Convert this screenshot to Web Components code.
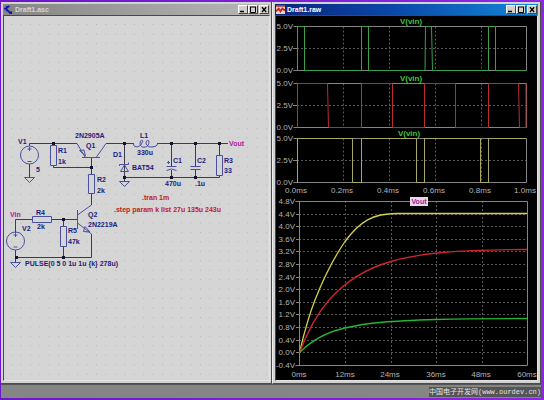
<!DOCTYPE html>
<html lang="en">
<head>
<meta charset="utf-8">
<title>Draft1</title>
<style>
html, body { height: 100%; margin: 0; }
body { background: #7a1fd2; font-family: "Liberation Sans", Arial, sans-serif; }
</style>
</head>
<body>
<app-desktop>
  <mdi-window caption="Draft1.asc"><circuit-sheet></circuit-sheet></mdi-window>
  <mdi-window caption="Draft1.raw" active><wave-viewer></wave-viewer></mdi-window>
  <site-mark slot="footer">中国电子开发网(www.ourdev.cn)</site-mark>
</app-desktop>
<script>
class AppDesktop extends HTMLElement {
  constructor() {
    super();
    this.attachShadow({ mode: 'open' }).innerHTML = `
      <style>
        :host { display: flex; flex-direction: column; box-sizing: border-box; min-height: 100%; padding: 2px 3px 2px 1px; background: linear-gradient(90deg, #6a18c8, #8a28e0); }
        main { flex: 1; display: grid; grid-template-columns: 271fr 269fr; }
        footer { display: flex; justify-content: flex-end; align-items: center; background: #858585; border-top: 1px solid #555; height: 13px; }
      </style>
      <main><slot></slot></main>
      <footer><slot name="footer"></slot></footer>`;
  }
}
customElements.define('app-desktop', AppDesktop);

class SiteMark extends HTMLElement {
  constructor() {
    super();
    this.attachShadow({ mode: 'open' }).innerHTML = `
      <style>
        :host { display: block; background: #555; color: #e4e4e4; font: 7px/10px "Liberation Mono", "Noto Sans CJK SC", monospace; white-space: nowrap; }
      </style><slot></slot>`;
  }
}
customElements.define('site-mark', SiteMark);

class MdiWindow extends HTMLElement {
  constructor() {
    super();
    const active = this.hasAttribute('active');
    const logo = active
      ? `<rect width="10" height="10" fill="#e9d3cf"/><rect y="0" width="10" height="2" fill="#b53a30"/><path d="M0 7 L3 4 L5 7 L7 4 L10 6" fill="none" stroke="#c4281c" stroke-width="2"/>`
      : `<path d="M0 4H3M3 1V7M3 3L6 1M3 5L7 9M6 9H8V7" fill="none" stroke="#1717a8" stroke-width="2"/>`;
    this.attachShadow({ mode: 'open' }).innerHTML = `
      <style>
        :host { display: flex; flex-direction: column; min-width: 0; box-sizing: border-box; padding: 2px 1px 2px 2px; background: #d2d2d2; border-right: 1px solid #4c4c4c; border-bottom: 1px solid #4c4c4c; }
        :host([active]) { padding: 2px; border-left: 1px solid #eee; }
        header { display: flex; align-items: center; gap: 2px; height: 11px; padding-left: 1px; background: linear-gradient(90deg, #858585, #b8b8b8); color: #d6d6d6; }
        :host([active]) header { background: linear-gradient(90deg, #0a2580, #0a48a8 45%, #1488d8); color: #fff; }
        svg { width: 9px; height: 9px; flex: none; }
        h1 { flex: 1; margin: 0; font-size: 7px; line-height: 11px; font-weight: bold; }
        nav { display: flex; padding-right: 1px; }
        button { box-sizing: border-box; width: 10px; height: 9px; padding: 0; border: 1px solid; border-color: #fff #444 #444 #fff; background: #d2d0cc; display: grid; place-items: center; }
        button:last-child { margin-left: 1px; }
        button svg { width: 8px; height: 7px; }
        section { flex: 1; display: flex; flex-direction: column; border: 1px solid #484848; border-right-color: #e4e4e4; border-bottom-color: #e4e4e4; }
        ::slotted(*) { flex: 1; }
      </style>
      <header>
        <svg viewBox="0 0 10 10">${logo}</svg>
        <h1></h1>
        <nav>
          <button aria-label="Minimize"><svg viewBox="0 0 8 7"><path d="M1 5.5H5" stroke="#000" stroke-width="1.5"/></svg></button>
          <button aria-label="Maximize"><svg viewBox="0 0 8 7"><path d="M1.5 1V6.5H6.5V1M1 1H7" fill="none" stroke="#000"/></svg></button>
          <button aria-label="Close"><svg viewBox="0 0 8 7"><path d="M2 1.2L6.2 6M6.2 1.2L2 6" stroke="#000" stroke-width="1.3"/></svg></button>
        </nav>
      </header>
      <section><slot></slot></section>`;
    this.shadowRoot.querySelector('h1').textContent = this.getAttribute('caption');
  }
}
customElements.define('mdi-window', MdiWindow);

class CircuitSheet extends HTMLElement {
  constructor() {
    super();
    const labels = [
      [18, 144, 'V1'], [36, 172, '5'], [58, 153, 'R1'], [58, 164, '1k'],
      [75, 138, '2N2905A'], [86, 148, 'Q1'], [97, 182, 'R2'], [97, 193, '2k'],
      [113, 157, 'D1'], [132, 170, 'BAT54'], [140, 138, 'L1'], [137, 155, '330u'],
      [173, 163, 'C1'], [197, 163, 'C2'], [224, 163, 'R3'], [224, 173, '33'],
      [165, 186, '470u'], [195, 186, '.1u'], [229, 146, 'Vout', 'net'],
      [142, 200, '.tran 1m', 'cmd'], [114, 212, '.step param k list 27u 135u 243u', 'cmd'],
      [10, 217, 'Vin', 'net'], [36, 215, 'R4'], [37, 229, '2k'], [22, 231, 'V2'],
      [68, 233, 'R5'], [68, 244, '47k'], [88, 217, 'Q2'], [88, 227, '2N2219A'],
      [25, 266, 'PULSE(0 5 0 1u 1u {k} 278u)']
    ];
    const nodes = [[53,143],[124,143],[171,143],[195,143],[219,143],[91,167],[124,177],[171,177],[195,177],[63,219],[63,257],[16,257]];
    const ground = (x, y) => `M${x - 5} ${y}H${x + 5}L${x} ${y + 5}Z`;
    this.attachShadow({ mode: 'open' }).innerHTML = `
      <style>
        :host { display: block; background: #d5d5d5; }
        svg { display: block; width: 100%; height: auto; }
        .wire { fill: none; stroke: #3c3c4c; }
        .part { fill: none; stroke: #4a50a0; }
        text { font-size: 7px; font-weight: bold; fill: #1c1c7c; }
        .net { fill: #b0189c; }
        .cmd { fill: #c01c1c; }
      </style>
      <svg viewBox="4 16 265 364" role="img" aria-label="Circuit schematic">
        <defs><pattern id="grid" x="11" y="24" width="9.45" height="9.45" patternUnits="userSpaceOnUse"><rect width="1" height="1" fill="#b2b2b2"/></pattern></defs>
        <rect x="11" y="24" width="258" height="352" fill="url(#grid)"/>
        <path class="wire" d="M29.5 146V143.5H77M53.5 143V146M53.5 165V167.5H91M91.5 158V174M106 143.5H134M157 143.5H228M124.5 143V181M124 177.5H219.5V175M219.5 143V156M171.5 143V166M171.5 170V177M195.5 143V166M195.5 170V177M29.5 164V177M91.5 193V205M15.5 232V219.5H32M51 219.5H77M63.5 219V227M63.5 246V257M91.5 234V257.5H15.5V262M15.5 250V257"/>
        <g class="part">
          <circle cx="29.5" cy="155" r="9"/><circle cx="15.5" cy="241" r="9"/>
          <path d="M29.5 147V151M27.5 149H31.5M27.5 161.5H31.5M15.5 232V237M13.5 235H17.5M13.5 247H17.5"/>
          <path d="${ground(29.5, 177.5)}${ground(124.5, 181.5)}${ground(15.5, 262.5)}"/>
          <path d="M50.5 145.5H56.5V165.5H50.5ZM88.5 174.5H94.5V193.5H88.5ZM216.5 155.5H222.5V175.5H216.5ZM32.5 216.5H51.5V222.5H32.5ZM60.5 226.5H66.5V246.5H60.5Z"/>
          <path d="M82 157.5H100M77 143.5L85 157M79.5 150.5L84 150L85.5 156Z M96.5 157L106 143.5"/>
          <path d="M77.5 210V229M77.5 215L91.5 205M77.5 223L91.5 234M85 226.5L90 232L83.5 231.5Z"/>
          <path d="M133 143.5Q134 147 137 147Q141 147 143 141Q140 139 140 144Q141 148 145 147Q149 147 149 141Q146 139 146 144Q148 148 152 147Q157 147 158 143.5"/>
          <path d="M119.5 166V164.5H128.5V162.5M120.5 171.5L124.5 165L128.5 171.5Z"/>
          <path d="M166.5 166.5H176.5M166.5 170.5Q171.5 167.5 176.5 170.5M167 162.5H170M168.5 161V164M190.5 166.5H200.5M190.5 169.5H200.5"/>
        </g>
        ${nodes.map(([x, y]) => `<rect x="${x - 1}" y="${y - 1}" width="3" height="3" fill="#14142c"/>`).join('')}
        ${labels.map(([x, y, s, c]) => `<text x="${x}" y="${y}" class="${c || ''}">${s}</text>`).join('')}
      </svg>`;
  }
}
customElements.define('circuit-sheet', CircuitSheet);

class WaveViewer extends HTMLElement {
  constructor() {
    super();
    const frame = (x1, y1, x2, y2) => `<path class="frame" d="M${x1 - 4} ${y1}H${x2}V${y2}H${x1 - 4}M${x1} ${y1}V${y2}"/>`;
    const pulses = [
      { top: 26.5, name: 411, color: '#38a048', d: 'M297.5 70.5V26.5H304.5V70.5H361.5V26.5H368.5V70.5H425L425.5 26.5H431.5L432.5 70.5H488.5V26.5H495.5V70.5H526' },
      { top: 83.5, name: 411, color: '#b82c30', d: 'M297.5 127.5V83.5H327.5L328.5 127.5H361.5V83.5H392.5V127.5H424.5V83.5H455.5V127.5H488.5V83.5H518.5L519.5 127.5H526V83.5' },
      { top: 138.5, name: 409, color: '#a8a860', d: 'M297.5 182.5V138.5H352.5V182.5H361.5V138.5H416.5V182.5H424.5V138.5H480.5V182.5H488.5V138.5H526' }
    ];
    const upper = pulses.map(p => `
      <path class="grid" d="M297 ${p.top + 22}H526${[343.5, 389.5, 435.5, 481.5].map(x => `M${x} ${p.top}V${p.top + 44}`).join('')}"/>
      ${frame(297.5, p.top, 526.5, p.top + 44)}<path class="grid solid" d="M293 ${p.top + 22}H297"/>
      ${['5.0V', '2.5V', '0.0V'].map((s, i) => `<text class="end" x="293" y="${p.top + 22 * i + 2.5}">${s}</text>`).join('')}
      <path d="${p.d}" fill="none" stroke="${p.color}"/>
      <text class="name" x="${p.name}" y="${p.top - 2.5}">V(vin)</text>`).join('');
    const volts = Array.from({ length: 14 }, (_, i) => ((12 - i) * 4 / 10).toFixed(1) + 'V');
    const rowY = i => Math.round(201 + i * 12.6) + 0.5;
    this.attachShadow({ mode: 'open' }).innerHTML = `
      <style>
        :host { display: block; background: #000; }
        svg { display: block; width: 100%; height: auto; }
        text { font-size: 8px; fill: #b4b4b4; text-anchor: middle; }
        .end { text-anchor: end; }
        .name { font-weight: bold; fill: #3cc83c; }
        .vout { font-weight: bold; font-size: 7px; fill: #9a1c98; }
        .frame { fill: none; stroke: #858585; }
        .grid { fill: none; stroke: #585858; stroke-dasharray: 2 2; }
        .solid { stroke-dasharray: none; stroke: #858585; }
        .curve { fill: none; stroke-width: 1.3; }
      </style>
      <svg viewBox="276 16 261 181" role="img" aria-label="Input pulses">
        ${upper}
        ${['0.0ms', '0.2ms', '0.4ms', '0.6ms', '0.8ms', '1.0ms'].map((s, i) => `<text x="${[296, 342, 388, 434, 480, 525][i]}" y="193">${s}</text>`).join('')}
      </svg>
      <svg viewBox="276 197 261 183" role="img" aria-label="Output voltage">
        <path class="grid" d="${volts.map((_, i) => `M299 ${rowY(i)}H527`).join('')}${[345.5, 391.5, 436.5, 482.5].map(x => `M${x} 201V365`).join('')}"/>
        <path class="solid" d="${volts.map((_, i) => `M296 ${rowY(i)}H299`).join('')}"/>
        ${frame(299.5, 201.5, 527.5, 365.5)}
        ${volts.map((s, i) => `<text class="end" x="295" y="${rowY(i) + 2.5}">${s}</text>`).join('')}
        <path class="curve" d="M299.5 352.5C306 325 311 310 315 300C324 277 333 259 345 241.5C360 221 373 213.5 397 213.5H527" stroke="#d2d248"/>
        <path class="curve" d="M299.5 352.5C308 330 316 315 329 300C345 282 364 269 391 261.5C420 253 455 250 527 249.5" stroke="#cc2430"/>
        <path class="curve" d="M299.5 352.5C312 340 327 332 345 328C368 322.5 391 321 436 319.5C466 318.7 495 318.5 527 318.5" stroke="#28b434"/>
        <rect x="410" y="197" width="18" height="9" fill="#ead6ec"/>
        <text class="vout" x="419" y="204">Vout</text>
        ${['0ms', '12ms', '24ms', '36ms', '48ms', '60ms'].map((s, i) => `<text x="${[299, 345, 390, 436, 481, 527][i]}" y="377">${s}</text>`).join('')}
      </svg>`;
  }
}
customElements.define('wave-viewer', WaveViewer);
</script>
</body>
</html>
